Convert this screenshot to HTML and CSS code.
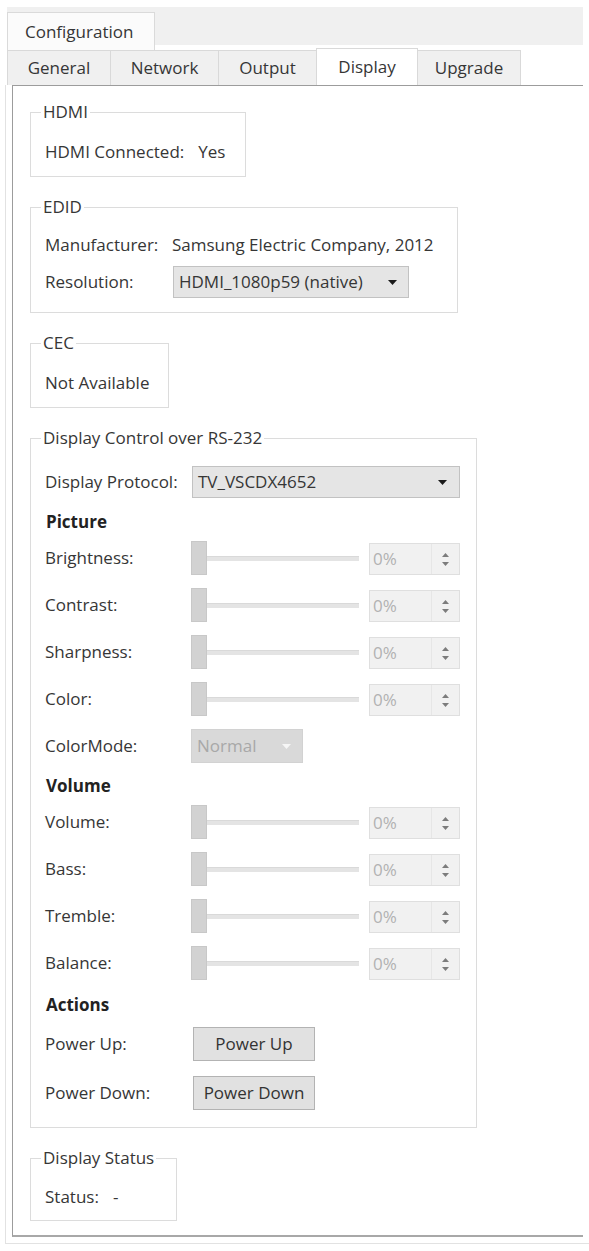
FILE: index.html
```html
<!DOCTYPE html>
<html lang="en">
<head>
    <meta charset="UTF-8">
    <meta name="viewport" content="width=device-width, initial-scale=1.0">
    <title>Configuration</title>
    <link rel="stylesheet" href="styles.css">
</head>
<body>
    <div class="window">
        <div class="cfg-bar">
            <div class="cfg-tab">Configuration</div>
        </div>

        <div class="tabs">
            <div class="tab tab-general">General</div>
            <div class="tab tab-network">Network</div>
            <div class="tab tab-output">Output</div>
            <div class="tab tab-display active">Display</div>
            <div class="tab tab-upgrade">Upgrade</div>
        </div>

        <div class="frame">
            <div class="pane">

                <fieldset class="group group-hdmi">
                    <legend>HDMI</legend>
                    <div class="line">
                        <span>HDMI Connected:</span>
                        <span class="value-hdmi">Yes</span>
                    </div>
                </fieldset>

                <fieldset class="group group-edid">
                    <legend>EDID</legend>
                    <div class="line">
                        <span class="label-edid">Manufacturer:</span>
                        <span>Samsung Electric Company, 2012</span>
                    </div>
                    <div class="line line-combo">
                        <span class="label-edid">Resolution:</span>
                        <div class="combo combo-resolution">
                            <span>HDMI_1080p59 (native)</span>
                            <svg class="combo-arrow" viewBox="0 0 9 5"><path d="M0 0h9L4.5 5z"/></svg>
                        </div>
                    </div>
                </fieldset>

                <fieldset class="group group-cec">
                    <legend>CEC</legend>
                    <div class="line">Not Available</div>
                </fieldset>

                <fieldset class="group group-rs232">
                    <legend>Display Control over RS-232</legend>

                    <div class="ctl-row row-protocol">
                        <span class="label">Display Protocol:</span>
                        <div class="combo combo-protocol">
                            <span>TV_VSCDX4652</span>
                            <svg class="combo-arrow" viewBox="0 0 9 5"><path d="M0 0h9L4.5 5z"/></svg>
                        </div>
                    </div>

                    <div class="section">Picture</div>
                    <div class="ctl-row">
                        <span class="label">Brightness:</span>
                        <div class="slider"><span class="slider-handle"></span><span class="slider-track"></span></div>
                        <div class="spin"><span class="spin-text">0%</span><span class="spin-arrows"><svg viewBox="0 0 7 13"><path d="M3.5 0L7 4H0zM0 9h7L3.5 13z"/></svg></span></div>
                    </div>
                    <div class="ctl-row">
                        <span class="label">Contrast:</span>
                        <div class="slider"><span class="slider-handle"></span><span class="slider-track"></span></div>
                        <div class="spin"><span class="spin-text">0%</span><span class="spin-arrows"><svg viewBox="0 0 7 13"><path d="M3.5 0L7 4H0zM0 9h7L3.5 13z"/></svg></span></div>
                    </div>
                    <div class="ctl-row">
                        <span class="label">Sharpness:</span>
                        <div class="slider"><span class="slider-handle"></span><span class="slider-track"></span></div>
                        <div class="spin"><span class="spin-text">0%</span><span class="spin-arrows"><svg viewBox="0 0 7 13"><path d="M3.5 0L7 4H0zM0 9h7L3.5 13z"/></svg></span></div>
                    </div>
                    <div class="ctl-row">
                        <span class="label">Color:</span>
                        <div class="slider"><span class="slider-handle"></span><span class="slider-track"></span></div>
                        <div class="spin"><span class="spin-text">0%</span><span class="spin-arrows"><svg viewBox="0 0 7 13"><path d="M3.5 0L7 4H0zM0 9h7L3.5 13z"/></svg></span></div>
                    </div>
                    <div class="ctl-row">
                        <span class="label">ColorMode:</span>
                        <div class="combo combo-disabled">
                            <span>Normal</span>
                            <svg class="combo-arrow" viewBox="0 0 9 5"><path d="M0 0h9L4.5 5z"/></svg>
                        </div>
                    </div>

                    <div class="section section-volume">Volume</div>
                    <div class="ctl-row">
                        <span class="label">Volume:</span>
                        <div class="slider"><span class="slider-handle"></span><span class="slider-track"></span></div>
                        <div class="spin"><span class="spin-text">0%</span><span class="spin-arrows"><svg viewBox="0 0 7 13"><path d="M3.5 0L7 4H0zM0 9h7L3.5 13z"/></svg></span></div>
                    </div>
                    <div class="ctl-row">
                        <span class="label">Bass:</span>
                        <div class="slider"><span class="slider-handle"></span><span class="slider-track"></span></div>
                        <div class="spin"><span class="spin-text">0%</span><span class="spin-arrows"><svg viewBox="0 0 7 13"><path d="M3.5 0L7 4H0zM0 9h7L3.5 13z"/></svg></span></div>
                    </div>
                    <div class="ctl-row">
                        <span class="label">Tremble:</span>
                        <div class="slider"><span class="slider-handle"></span><span class="slider-track"></span></div>
                        <div class="spin"><span class="spin-text">0%</span><span class="spin-arrows"><svg viewBox="0 0 7 13"><path d="M3.5 0L7 4H0zM0 9h7L3.5 13z"/></svg></span></div>
                    </div>
                    <div class="ctl-row">
                        <span class="label">Balance:</span>
                        <div class="slider"><span class="slider-handle"></span><span class="slider-track"></span></div>
                        <div class="spin"><span class="spin-text">0%</span><span class="spin-arrows"><svg viewBox="0 0 7 13"><path d="M3.5 0L7 4H0zM0 9h7L3.5 13z"/></svg></span></div>
                    </div>

                    <div class="section section-actions">Actions</div>
                    <div class="ctl-row row-power-up">
                        <span class="label">Power Up:</span>
                        <button class="btn">Power Up</button>
                    </div>
                    <div class="ctl-row row-power-down">
                        <span class="label">Power Down:</span>
                        <button class="btn">Power Down</button>
                    </div>
                </fieldset>

                <fieldset class="group group-status">
                    <legend>Display Status</legend>
                    <div class="line">
                        <span>Status:</span>
                        <span class="value-status">-</span>
                    </div>
                </fieldset>

            </div>
        </div>
    </div>
</body>
</html>
```

FILE: styles.css
```css
* {
    margin: 0;
    padding: 0;
    box-sizing: border-box;
}

body {
    font-family: 'Open Sans', 'Noto Sans', sans-serif;
    font-size: 17px;
    line-height: 20px;
    color: #363636;
    background: #fff;
}

.window {
    width: 589px;
    padding: 7px 6px 0 7px;
}

/* outer tab strip */
.cfg-bar {
    display: flex;
    height: 43px;
    background: linear-gradient(#f0f0f0 38px, #fff 38px);
}

.cfg-tab {
    margin-top: 5px;
    width: 148px;
    height: 38px;
    padding-left: 17px;
    display: flex;
    align-items: center;
    background: #fbfbfb;
    border: 1px solid #dadada;
    border-bottom: none;
}

/* inner tab bar */
.tabs {
    display: flex;
    align-items: flex-end;
    height: 35px;
}

.tab {
    height: 35px;
    margin-left: -1px;
    display: flex;
    align-items: center;
    justify-content: center;
    background: #f0f0f0;
    border: 1px solid #d9d9d9;
    border-bottom: none;
}

.tab-general { width: 104px; margin-left: 0; }
.tab-network { width: 109px; }
.tab-output { width: 99px; }
.tab-display { width: 102px; }
.tab-upgrade { width: 104px; }

.tab.active {
    height: 37px;
    background: #fff;
}

.frame {
    margin: 0 -6px 0 -2px;
    padding: 0 6px 6px 6px;
    border-left: 1px solid #e2e2e2;
    border-bottom: 1px solid #e2e2e2;
}

.pane {
    height: 1152px;
    padding: 16px 0 0 17px;
    border-top: 1px solid #9c9c9c;
    border-left: 1px solid #9c9c9c;
    border-bottom: 2px solid #a8a8a8;
}

/* group boxes */
.group {
    border: 1px solid #dcdcdc;
    padding: 0 16px 14px 14px;
    margin-top: 20px;
}

.group legend {
    margin-left: -4px;
    padding: 0 2px;
}

.group-hdmi { width: 216px; margin-top: 0; padding-top: 20px; }
.group-edid { width: 428px; padding-top: 18px; }
.group-cec { width: 139px; padding-top: 20px; }
.group-rs232 { width: 447px; padding-top: 18px; padding-bottom: 17px; }
.group-status { width: 147px; padding-top: 19px; padding-bottom: 13px; }

.line {
    display: flex;
    align-items: center;
    height: 20px;
}

.value-hdmi { margin-left: 14px; }
.value-status { margin-left: 14px; }

.label-edid { width: 127px; }

.line-combo {
    height: 32px;
    margin-top: 11px;
}

/* combo boxes */
.combo {
    height: 32px;
    display: flex;
    align-items: center;
    justify-content: space-between;
    padding: 0 12px 0 5px;
    background: #e5e5e5;
    border: 1px solid #c2c2c2;
    white-space: nowrap;
}

.combo-arrow {
    width: 9px;
    height: 5px;
    fill: #1a1a1a;
}

.combo-resolution {
    width: 236px;
    margin-left: 1px;
    padding-right: 11px;
}

.combo-protocol {
    width: 268px;
    margin-left: 1px;
}

.combo-disabled {
    width: 112px;
    height: 34px;
    padding-right: 11px;
    color: #a8a8a8;
    background: #d9d9d9;
    border-color: #d2d2d2;
}

.combo-disabled .combo-arrow {
    fill: #f6f6f6;
}

/* rows of the RS-232 box */
.ctl-row {
    display: flex;
    align-items: center;
    height: 34px;
    margin-top: 13px;
}

.ctl-row .label {
    width: 146px;
    flex-shrink: 0;
}

.row-protocol {
    height: 32px;
    margin-top: 0;
}

.section {
    height: 20px;
    margin-top: 14px;
    padding-left: 1px;
    font-weight: 700;
    color: #222;
}

.section + .ctl-row { margin-top: 9px; }
.section-volume { margin-top: 13px; }
.section-actions { margin-top: 15px; }
.section + .row-power-up { margin-top: 12px; }
.row-power-down { margin-top: 15px; }

.slider {
    width: 168px;
    height: 34px;
    display: flex;
    align-items: center;
}

.slider-handle {
    width: 16px;
    height: 34px;
    background: #d2d2d2;
    border: 1px solid #c8c8c8;
}

.slider-track {
    flex: 1;
    height: 5px;
    background: #e4e4e4;
    border-top: 1px solid #d9d9d9;
}

.spin {
    width: 91px;
    height: 32px;
    margin-left: 10px;
    align-self: flex-end;
    display: flex;
    background: #f1f1f1;
    border: 1px solid #dfdfdf;
    color: #b2b2b2;
}

.spin-text {
    flex: 1;
    display: flex;
    align-items: center;
    padding-left: 3px;
}

.spin-arrows {
    width: 28px;
    display: flex;
    align-items: center;
    justify-content: center;
    border-left: 1px solid #e6e6e6;
}

.spin-arrows svg {
    width: 7px;
    height: 13px;
    fill: #7c7c7c;
}

.btn {
    width: 122px;
    height: 34px;
    margin-left: 2px;
    font: inherit;
    color: #333;
    background: #e1e1e1;
    border: 1px solid #b3b3b3;
}
```
